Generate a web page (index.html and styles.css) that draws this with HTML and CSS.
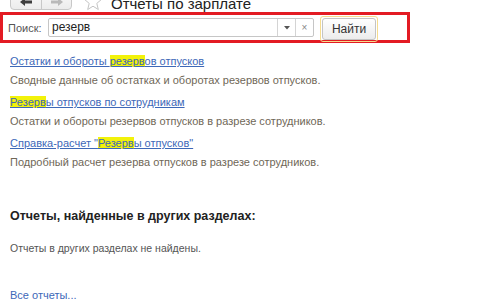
FILE: index.html
```html
<!DOCTYPE html>
<html lang="ru">
<head>
<meta charset="utf-8">
<link rel="stylesheet" href="styles.css">
</head>
<body>
<div class="page">
  <div class="topbar">
    <div class="navgroup">
      <span class="navbtn">
        <svg width="14" height="10" viewBox="0 0 14 10"><path d="M1 5 L6 1 L6 3.5 L13 3.5 L13 6.5 L6 6.5 L6 9 Z" fill="#3d3d3d"/></svg>
      </span>
      <span class="navbtn">
        <svg width="14" height="10" viewBox="0 0 14 10"><path d="M13 5 L8 1 L8 3.5 L1 3.5 L1 6.5 L8 6.5 L8 9 Z" fill="#b9b9b9"/></svg>
      </span>
    </div>
    <svg class="star" width="20" height="18" viewBox="0 0 20 18"><path d="M10 -2 L12.4 4 L18.5 4.4 L13.8 8.4 L15.3 14.5 L10 11.2 L4.7 14.5 L6.2 8.4 L1.5 4.4 L7.6 4 Z" fill="none" stroke="#c4c4c4" stroke-width="1"/></svg>
    <h1 class="title">Отчеты по зарплате</h1>
  </div>

  <div class="searchbar">
    <span class="label">Поиск:</span>
    <div class="field">
      <span class="value">резерв</span>
      <span class="drop"><svg width="6" height="4" viewBox="0 0 6 4"><path d="M0 0 L6 0 L3 3.5 Z" fill="#555"/></svg></span>
      <span class="clear">×</span>
    </div>
    <div class="btnwrap"><button class="find">Найти</button></div>
  </div>

  <div class="results">
    <div class="item">
      <a class="link" href="#">Остатки и обороты <mark>резерв</mark>ов отпусков</a>
      <p class="desc">Сводные данные об остатках и оборотах резервов отпусков.</p>
    </div>
    <div class="item">
      <a class="link" href="#"><mark>Резерв</mark>ы отпусков по сотрудникам</a>
      <p class="desc">Остатки и обороты резервов отпусков в разрезе сотрудников.</p>
    </div>
    <div class="item">
      <a class="link" href="#">Справка-расчет "<mark>Резерв</mark>ы отпусков"</a>
      <p class="desc">Подробный расчет резерва отпусков в разрезе сотрудников.</p>
    </div>
  </div>

  <h2 class="other">Отчеты, найденные в других разделах:</h2>
  <p class="none">Отчеты в других разделах не найдены.</p>
  <a class="link all" href="#">Все отчеты...</a>
</div>
</body>
</html>
```
FILE: styles.css
```css
html, body {
  margin: 0;
  padding: 0;
  background: #fff;
  width: 500px;
  height: 300px;
  overflow: hidden;
}
.page {
  font-family: "Liberation Sans", Arial, sans-serif;
  font-size: 11px;
  color: #333;
}
.topbar {
  display: flex;
  align-items: flex-end;
  height: 10px;
  padding-left: 10px;
}
.navgroup {
  display: flex;
  margin-top: -14px;
  height: 22px;
  border: 1px solid #c8c8c8;
  border-radius: 0 0 4px 4px;
  background: linear-gradient(#fdfdfd, #ececec);
}
.navbtn {
  width: 30px;
  display: flex;
  align-items: flex-end;
  justify-content: center;
  padding-bottom: 2px;
  box-sizing: border-box;
}
.navbtn + .navbtn {
  border-left: 1px solid #c8c8c8;
}
.star {
  margin-left: 11px;
  margin-bottom: -3px;
}
.title {
  margin: 0 0 -1px 8px;
  font-weight: normal;
  font-size: 15px;
  line-height: 15px;
  color: #222;
  white-space: nowrap;
}
.searchbar {
  margin-top: 2px;
  width: 399px;
  height: 25px;
  border: 3px solid #e31b23;
  display: flex;
  align-items: center;
  padding-left: 5px;
  box-sizing: content-box;
}
.label {
  color: #555;
  font-size: 11px;
  width: 40px;
}
.field {
  display: flex;
  align-items: stretch;
  width: 264px;
  height: 17px;
  border: 1px solid #c6c6c6;
  border-radius: 2px;
  background: #fff;
}
.value {
  flex: 1;
  padding-left: 3px;
  font-size: 12px;
  color: #222;
  line-height: 17px;
}
.drop, .clear {
  width: 17px;
  border-left: 1px solid #d4d4d4;
  display: flex;
  align-items: center;
  justify-content: center;
  color: #888;
  font-size: 10px;
}
.btnwrap {
  margin-left: 6px;
  border: 1px solid #f5dc8e;
  border-radius: 3px;
  padding: 1px;
  align-self: flex-end;
  margin-bottom: -2px;
}
.find {
  width: 54px;
  height: 22px;
  border: 1px solid #c4c4c4;
  border-radius: 3px;
  background: linear-gradient(#ffffff, #ececec);
  font-family: "Liberation Sans", Arial, sans-serif;
  font-size: 12px;
  color: #333;
  padding: 0;
}
.results {
  padding: 9px 0 0 10px;
  display: flex;
  flex-direction: column;
  gap: 4px;
}
.item {
  display: flex;
  flex-direction: column;
}
.link {
  color: #3d68b8;
  text-decoration: underline;
  font-size: 11px;
  line-height: 18px;
  align-self: flex-start;
}
mark {
  background: #f2f20a;
  color: #3d68b8;
}
.desc {
  margin: 1px 0 0;
  color: #6f6757;
  font-size: 11px;
  line-height: 18px;
}
.other {
  margin: 37px 0 0 10px;
  font-size: 12.5px;
  line-height: 16px;
  font-weight: bold;
  color: #222;
}
.none {
  margin: 16px 0 0 10px;
  color: #555;
  font-size: 10.5px;
  line-height: 16px;
}
.all {
  display: inline-block;
  margin: 30px 0 0 10px;
}
```
